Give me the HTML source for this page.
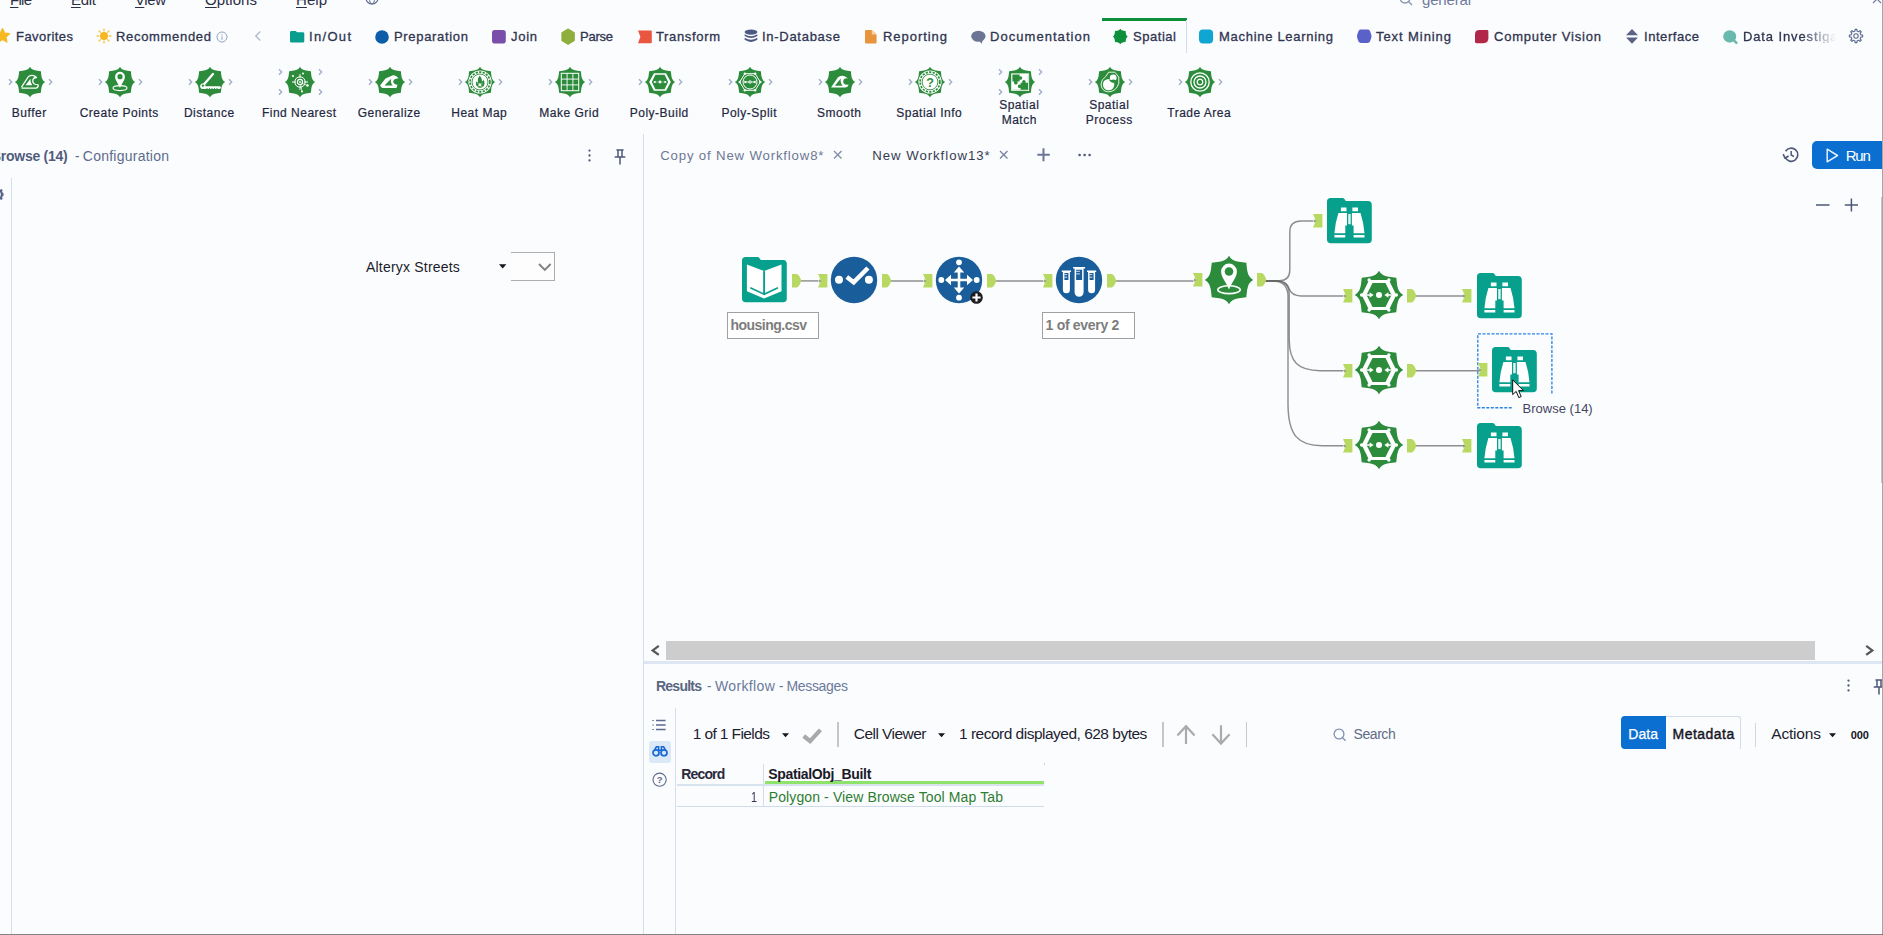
<!DOCTYPE html>
<html lang="en"><head><meta charset="utf-8"><title>Alteryx Designer - New Workflow13*</title>
<style>
html,body{margin:0;padding:0}
body{width:1883px;height:935px;overflow:hidden;background:#fbfcfe;font-family:"Liberation Sans",sans-serif;position:relative}
.t{position:absolute;white-space:pre;}
.tl{position:absolute;width:120px;text-align:center;font-size:12px;line-height:16px;letter-spacing:0.5px;text-indent:0.5px;color:#1f2840;white-space:pre;-webkit-text-stroke:0.2px #1f2840}
.abs{position:absolute}
svg{position:absolute;overflow:visible}
</style></head><body>
<!--LINES-->
<div class="abs" style="left:1881px;top:0px;width:1px;height:935px;background:#ffffff;"></div>
<div class="abs" style="left:0px;top:933px;width:1883px;height:1px;background:#ffffff;"></div>
<div class="abs" style="left:1880.9px;top:197px;width:1.1px;height:286px;background:#c3c5c4;"></div>
<div class="abs" style="left:1879.8px;top:197px;width:1.1px;height:286px;background:#ffffff;"></div>
<div class="abs" style="left:1102px;top:18px;width:85px;height:2.5px;background:#0e8f3c;"></div>
<div class="abs" style="left:1186.3px;top:20px;width:1px;height:33px;background:#d3dbe8;"></div>
<div class="abs" style="left:11px;top:178px;width:1px;height:757px;background:#d6deec;"></div>
<div class="abs" style="left:643px;top:134px;width:1px;height:801px;background:#d3ddec;"></div>
<div class="abs" style="left:666px;top:641px;width:1149px;height:19px;background:#cdcdcd;"></div>
<div class="abs" style="left:644px;top:661px;width:1238px;height:3px;background:#dde6f2;"></div>
<div class="abs" style="left:675px;top:708px;width:1px;height:227px;background:#d6deec;"></div>
<!--CATEGORY ICONS-->
<svg style="left:-5px;top:28.0px" width="15" height="16" viewBox="0 0 15 16" ><polygon points="7.50,0.50 9.62,5.09 14.63,5.68 10.92,9.11 11.91,14.07 7.50,11.60 3.09,14.07 4.08,9.11 0.37,5.68 5.38,5.09" fill="#f6b91f" stroke="#f6b91f" stroke-width="1.2" stroke-linejoin="round"/></svg>
<svg style="left:96.5px;top:29.0px" width="14" height="14" viewBox="0 0 14 14" ><circle cx="7" cy="7" r="4" fill="#f6b624"/><line x1="12.20" y1="7.00" x2="14.00" y2="7.00" stroke="#f8c24a" stroke-width="1.3" stroke-linecap="round"/><line x1="10.68" y1="10.68" x2="11.95" y2="11.95" stroke="#f8c24a" stroke-width="1.3" stroke-linecap="round"/><line x1="7.00" y1="12.20" x2="7.00" y2="14.00" stroke="#f8c24a" stroke-width="1.3" stroke-linecap="round"/><line x1="3.32" y1="10.68" x2="2.05" y2="11.95" stroke="#f8c24a" stroke-width="1.3" stroke-linecap="round"/><line x1="1.80" y1="7.00" x2="0.00" y2="7.00" stroke="#f8c24a" stroke-width="1.3" stroke-linecap="round"/><line x1="3.32" y1="3.32" x2="2.05" y2="2.05" stroke="#f8c24a" stroke-width="1.3" stroke-linecap="round"/><line x1="7.00" y1="1.80" x2="7.00" y2="0.00" stroke="#f8c24a" stroke-width="1.3" stroke-linecap="round"/><line x1="10.68" y1="3.32" x2="11.95" y2="2.05" stroke="#f8c24a" stroke-width="1.3" stroke-linecap="round"/></svg>
<svg style="left:216px;top:31px" width="12" height="12" viewBox="0 0 12 12" ><circle cx="6" cy="6" r="5" fill="none" stroke="#8fa5c0" stroke-width="1"/><rect x="5.5" y="5.2" width="1" height="3.6" fill="#8fa5c0"/><rect x="5.5" y="3.2" width="1" height="1.1" fill="#8fa5c0"/></svg>
<svg style="left:254px;top:30.0px" width="8" height="12" viewBox="0 0 8 12" ><path d="M6.2,1.6 L1.8,6 L6.2,10.4" fill="none" stroke="#b3bccc" stroke-width="1.4"/></svg>
<svg style="left:289.5px;top:29.8px" width="14.30" height="13.40" viewBox="0 0 15 15" preserveAspectRatio="none"><path d="M1.5,1 H6 L7.5,2.5 H13.5 Q15,2.5 15,4 V12.5 Q15,14 13.5,14 H1.5 Q0,14 0,12.5 V2.5 Q0,1 1.5,1Z" fill="#089d8c"/></svg>
<svg style="left:375px;top:29.5px" width="14.00" height="14.00" viewBox="0 0 15 15" preserveAspectRatio="none"><circle cx="7.5" cy="7.5" r="7.3" fill="#0c5ea9"/></svg>
<svg style="left:492px;top:29.5px" width="13.80" height="13.60" viewBox="0 0 14.5 14.5" preserveAspectRatio="none"><rect x="0" y="0" width="14.5" height="14.5" rx="3" fill="#7a4fa9"/></svg>
<svg style="left:561px;top:28.6px" width="14.20" height="15.30" viewBox="0 0 15 15" preserveAspectRatio="none"><polygon points="7.50,-0.10 14.08,3.70 14.08,11.30 7.50,15.10 0.92,11.30 0.92,3.70" fill="#8fae3d" stroke="#8fae3d" stroke-width="1" stroke-linejoin="round"/></svg>
<svg style="left:637.5px;top:29.6px" width="13.80" height="13.60" viewBox="0 0 14.5 14.5" preserveAspectRatio="none"><path d="M0,0.5 H13.5 Q14.5,0.5 14.5,1.5 V13 Q14.5,14 13.5,14 H0 L2.5,7.2Z" fill="#e8563f"/></svg>
<svg style="left:743.6px;top:29.2px" width="14.00" height="14.40" viewBox="0 0 15 15" preserveAspectRatio="none"><ellipse cx="7.5" cy="3.2" rx="6.8" ry="2.7" fill="#4d5985"/><path d="M0.7,5.5 Q7.5,9.5 14.3,5.5 V7.3 Q7.5,11.5 0.7,7.3Z" fill="#4d5985"/><path d="M0.7,9.2 Q7.5,13.2 14.3,9.2 V11.3 Q7.5,15.6 0.7,11.3Z" fill="#4d5985"/></svg>
<svg style="left:865px;top:29.5px" width="11.60" height="13.60" viewBox="0 0 12 15" preserveAspectRatio="none"><path d="M1.2,0 H7 L12,5 V13.8 Q12,15 10.8,15 H1.2 Q0,15 0,13.8 V1.2 Q0,0 1.2,0Z" fill="#e8943c"/><path d="M7,0 V5 H12Z" fill="#f6cfa0"/></svg>
<svg style="left:970.6px;top:29.8px" width="14.60" height="13.80" viewBox="0 0 15.5 15" preserveAspectRatio="none"><ellipse cx="7.8" cy="6.8" rx="7.6" ry="6" fill="#6c7496"/><path d="M8,11 L11.5,15 L12.5,10Z" fill="#6c7496"/></svg>
<svg style="left:1112.6px;top:28.6px" width="14.60" height="15.00" viewBox="0 0 15.5 15.5" preserveAspectRatio="none"><path transform="translate(7.75,7.75)" d="M0,-7.90Q0.79,-6.32 3.16,-5.93L5.65,-5.62L5.93,-3.16Q6.32,-0.79 7.90,0.00Q6.32,0.79 5.93,3.16L5.62,5.65L3.16,5.93Q0.79,6.32 0.00,7.90Q-0.79,6.32 -3.16,5.93L-5.65,5.62L-5.93,3.16Q-6.32,0.79 -7.90,0.00Q-6.32,-0.79 -5.93,-3.16L-5.62,-5.65L-3.16,-5.92Q-0.79,-6.32 -0.00,-7.90Z" fill="#0e8f3c"/></svg>
<svg style="left:1199.2px;top:28.8px" width="14.10" height="14.90" viewBox="0 0 15 15" preserveAspectRatio="none"><rect x="0" y="0.5" width="15" height="14" rx="4.2" fill="#0fa6d1"/></svg>
<svg style="left:1357.3px;top:29px" width="14.50" height="14.50" viewBox="0 0 15 15" preserveAspectRatio="none"><path d="M4,0.5 H11 Q12.6,0.5 13.4,2 L14.8,6 Q15.2,7.5 14.8,9 L13.4,13 Q12.6,14.5 11,14.5 H4 Q2.4,14.5 1.6,13 L0.2,9 Q-0.2,7.5 0.2,6 L1.6,2 Q2.4,0.5 4,0.5Z" fill="#5a62c9"/></svg>
<svg style="left:1475px;top:29.7px" width="13.40" height="13.20" viewBox="0 0 13.5 13.5" preserveAspectRatio="none"><path d="M4.5,0 H12 Q13.5,0 13.5,1.5 V8.5 Q13.5,13.5 8.5,13.5 H1.5 Q0,13.5 0,12 V4.5 Q0,0 4.5,0Z" fill="#b02747"/></svg>
<svg style="left:1626px;top:28.8px" width="12.00" height="14.80" viewBox="0 0 12 15" preserveAspectRatio="none"><path d="M6,0 L12,6.3 H0Z" fill="#5a6286"/><path d="M6,15 L12,8.7 H0Z" fill="#5a6286"/></svg>
<svg style="left:1723.2px;top:29.6px" width="14.40" height="13.80" viewBox="0 0 15 15" preserveAspectRatio="none"><circle cx="7" cy="7" r="6.8" fill="#6ab9ad"/><path d="M10.5,10.5 L14,14" stroke="#6ab9ad" stroke-width="2.6" stroke-linecap="round"/></svg>
<svg style="left:1848.5px;top:29.0px" width="14" height="14" viewBox="0 0 14 14" ><path d="M11.91,6.05L13.63,6.07L13.63,7.93L11.91,7.95L11.15,9.80L12.35,11.03L11.03,12.35L9.80,11.15L7.95,11.91L7.93,13.63L6.07,13.63L6.05,11.91L4.20,11.15L2.97,12.35L1.65,11.03L2.85,9.80L2.09,7.95L0.37,7.93L0.37,6.07L2.09,6.05L2.85,4.20L1.65,2.97L2.97,1.65L4.20,2.85L6.05,2.09L6.07,0.37L7.93,0.37L7.95,2.09L9.80,2.85L11.03,1.65L12.35,2.97L11.15,4.20Z" fill="none" stroke="#5e6a8c" stroke-width="1.1" stroke-linejoin="round"/><circle cx="7" cy="7" r="2.2" fill="none" stroke="#5e6a8c" stroke-width="1.1"/></svg>
<svg style="left:1399px;top:-8px" width="14" height="14" viewBox="0 0 14 14" ><circle cx="6" cy="6" r="5" fill="none" stroke="#8794b3" stroke-width="1.3"/><path d="M9.7,9.7 L13,13" stroke="#8794b3" stroke-width="1.4"/></svg>
<svg style="left:1872px;top:-6px" width="10" height="10" viewBox="0 0 10 10" ><path d="M1,1 L9,9 M9,1 L1,9" stroke="#6f7b9b" stroke-width="1.2"/></svg>
<svg style="left:365px;top:-9px" width="14" height="14" viewBox="0 0 14 14" ><circle cx="7" cy="7" r="6" fill="none" stroke="#5e6a8c" stroke-width="1.1"/><ellipse cx="7" cy="7" rx="2.6" ry="6" fill="none" stroke="#5e6a8c" stroke-width="1"/></svg>
<!--PALETTE-->
<svg style="left:13.7px;top:66px" width="32" height="32" viewBox="-16 -16 32 32" ><path d="M0,-15.20Q1.52,-12.16 6.08,-11.40L10.87,-10.82L11.40,-6.08Q12.16,-1.52 15.20,0.00Q12.16,1.52 11.40,6.08L10.82,10.87L6.08,11.40Q1.52,12.16 0.00,15.20Q-1.52,12.16 -6.08,11.40L-10.87,10.82L-11.40,6.08Q-12.16,1.52 -15.20,0.00Q-12.16,-1.52 -11.40,-6.08L-10.82,-10.87L-6.08,-11.40Q-1.52,-12.16 -0.00,-15.20Z" fill="#2c8c3c"/><path d="M-8.5,5.2 L-1.5,-5.5 Q3,-8 6.5,-4.5 Q2.5,-4.5 2.8,-0.5 Q3.2,2.8 8,2.6 Q8.8,5.4 6,6.2 H-8.5" fill="none" stroke="#fff" stroke-width="1.3" stroke-linejoin="round"/><path d="M-4.5,3.2 L0.5,-3.2 Q0,1 2.2,3.2Z" fill="#fff"/></svg>
<svg style="left:7.699999999999999px;top:78px" width="5" height="8" viewBox="0 0 5 8" ><path d="M1,1.2 L3.7,4 L1,6.8" fill="none" stroke="#a0adca" stroke-width="1.35"/></svg>
<svg style="left:47.7px;top:78px" width="5" height="8" viewBox="0 0 5 8" ><path d="M1,1.2 L3.7,4 L1,6.8" fill="none" stroke="#a0adca" stroke-width="1.35"/></svg>
<svg style="left:103.7px;top:66px" width="32" height="32" viewBox="-16 -16 32 32" ><path d="M0,-15.20Q1.52,-12.16 6.08,-11.40L10.87,-10.82L11.40,-6.08Q12.16,-1.52 15.20,0.00Q12.16,1.52 11.40,6.08L10.82,10.87L6.08,11.40Q1.52,12.16 0.00,15.20Q-1.52,12.16 -6.08,11.40L-10.87,10.82L-11.40,6.08Q-12.16,1.52 -15.20,0.00Q-12.16,-1.52 -11.40,-6.08L-10.82,-10.87L-6.08,-11.40Q-1.52,-12.16 -0.00,-15.20Z" fill="#2c8c3c"/><path d="M0,5.9 C-1.6,1.6 -4.9,-1.6 -4.9,-5.3 A4.9,4.9 0 0 1 4.9,-5.3 C4.9,-1.6 1.6,1.6 0,5.9Z" fill="#fff"/><circle cx="0" cy="-5.3" r="2.6" fill="#2c8c3c"/><ellipse cx="0" cy="6.1" rx="7" ry="2.5" fill="none" stroke="#fff" stroke-width="1.1"/></svg>
<svg style="left:97.7px;top:78px" width="5" height="8" viewBox="0 0 5 8" ><path d="M1,1.2 L3.7,4 L1,6.8" fill="none" stroke="#a0adca" stroke-width="1.35"/></svg>
<svg style="left:137.7px;top:78px" width="5" height="8" viewBox="0 0 5 8" ><path d="M1,1.2 L3.7,4 L1,6.8" fill="none" stroke="#a0adca" stroke-width="1.35"/></svg>
<svg style="left:193.7px;top:66px" width="32" height="32" viewBox="-16 -16 32 32" ><path d="M0,-15.20Q1.52,-12.16 6.08,-11.40L10.87,-10.82L11.40,-6.08Q12.16,-1.52 15.20,0.00Q12.16,1.52 11.40,6.08L10.82,10.87L6.08,11.40Q1.52,12.16 0.00,15.20Q-1.52,12.16 -6.08,11.40L-10.87,10.82L-11.40,6.08Q-12.16,1.52 -15.20,0.00Q-12.16,-1.52 -11.40,-6.08L-10.82,-10.87L-6.08,-11.40Q-1.52,-12.16 -0.00,-15.20Z" fill="#2c8c3c"/><path d="M-7.2,3.8 L3,-8" stroke="#fff" stroke-width="2.3" stroke-linecap="round"/><path d="M-7.4,5.6 H9.4" stroke="#fff" stroke-width="2.9" stroke-linecap="round"/><circle cx="-7.2" cy="4.2" r="2.6" fill="#fff"/><circle cx="-7" cy="3.6" r="1.2" fill="#2c8c3c"/><path d="M-3,6 V7.4 M-0.5,6 V7.4 M2,6 V7.4 M4.5,6 V7.4 M7,6 V7.4" stroke="#2c8c3c" stroke-width="0.9"/></svg>
<svg style="left:187.7px;top:78px" width="5" height="8" viewBox="0 0 5 8" ><path d="M1,1.2 L3.7,4 L1,6.8" fill="none" stroke="#a0adca" stroke-width="1.35"/></svg>
<svg style="left:227.7px;top:78px" width="5" height="8" viewBox="0 0 5 8" ><path d="M1,1.2 L3.7,4 L1,6.8" fill="none" stroke="#a0adca" stroke-width="1.35"/></svg>
<svg style="left:283.7px;top:66px" width="32" height="32" viewBox="-16 -16 32 32" ><path d="M0,-15.20Q1.52,-12.16 6.08,-11.40L10.87,-10.82L11.40,-6.08Q12.16,-1.52 15.20,0.00Q12.16,1.52 11.40,6.08L10.82,10.87L6.08,11.40Q1.52,12.16 0.00,15.20Q-1.52,12.16 -6.08,11.40L-10.87,10.82L-11.40,6.08Q-12.16,1.52 -15.20,0.00Q-12.16,-1.52 -11.40,-6.08L-10.82,-10.87L-6.08,-11.40Q-1.52,-12.16 -0.00,-15.20Z" fill="#2c8c3c"/><circle cx="0" cy="0" r="5.2" fill="none" stroke="#fff" stroke-width="1"/><circle cx="0" cy="0" r="2.6" fill="none" stroke="#fff" stroke-width="1.1"/><circle cx="0" cy="0" r="0.9" fill="#fff"/><path d="M0,-8 V-4 M0,8 V4 M-8,0 H-4 M8,0 H4" stroke="#fff" stroke-width="1"/><circle cx="-7" cy="-6" r="1.1" fill="#fff"/><circle cx="3" cy="-8.5" r="1" fill="#fff"/><circle cx="7.5" cy="3.5" r="1.2" fill="#fff"/><circle cx="2" cy="9.5" r="1" fill="#fff"/><path d="M1,1 L7.5,3.5 M0.5,2 L2,9.5" stroke="#fff" stroke-width="0.7"/></svg>
<svg style="left:277.7px;top:68px" width="5" height="8" viewBox="0 0 5 8" ><path d="M1,1.2 L3.7,4 L1,6.8" fill="none" stroke="#a0adca" stroke-width="1.35"/></svg>
<svg style="left:317.7px;top:68px" width="5" height="8" viewBox="0 0 5 8" ><path d="M1,1.2 L3.7,4 L1,6.8" fill="none" stroke="#a0adca" stroke-width="1.35"/></svg>
<svg style="left:277.7px;top:87.5px" width="5" height="8" viewBox="0 0 5 8" ><path d="M1,1.2 L3.7,4 L1,6.8" fill="none" stroke="#a0adca" stroke-width="1.35"/></svg>
<svg style="left:317.7px;top:87.5px" width="5" height="8" viewBox="0 0 5 8" ><path d="M1,1.2 L3.7,4 L1,6.8" fill="none" stroke="#a0adca" stroke-width="1.35"/></svg>
<svg style="left:373.7px;top:66px" width="32" height="32" viewBox="-16 -16 32 32" ><path d="M0,-15.20Q1.52,-12.16 6.08,-11.40L10.87,-10.82L11.40,-6.08Q12.16,-1.52 15.20,0.00Q12.16,1.52 11.40,6.08L10.82,10.87L6.08,11.40Q1.52,12.16 0.00,15.20Q-1.52,12.16 -6.08,11.40L-10.87,10.82L-11.40,6.08Q-12.16,1.52 -15.20,0.00Q-12.16,-1.52 -11.40,-6.08L-10.82,-10.87L-6.08,-11.40Q-1.52,-12.16 -0.00,-15.20Z" fill="#2c8c3c"/><path d="M-10,3.5 L-4.5,-3.5 L3,-6.8 Q7,-6.5 8.5,-3.5 Q4,-4 3.2,-0.5 Q3.5,2.5 7.5,2.8 L6.5,6 H-8Z" fill="#fff"/><path d="M-5.5,3.6 L1.2,-3.2 Q0.2,1 2.8,3.6Z" fill="#2c8c3c"/></svg>
<svg style="left:367.7px;top:78px" width="5" height="8" viewBox="0 0 5 8" ><path d="M1,1.2 L3.7,4 L1,6.8" fill="none" stroke="#a0adca" stroke-width="1.35"/></svg>
<svg style="left:407.7px;top:78px" width="5" height="8" viewBox="0 0 5 8" ><path d="M1,1.2 L3.7,4 L1,6.8" fill="none" stroke="#a0adca" stroke-width="1.35"/></svg>
<svg style="left:463.7px;top:66px" width="32" height="32" viewBox="-16 -16 32 32" ><path d="M0,-15.20Q1.52,-12.16 6.08,-11.40L10.87,-10.82L11.40,-6.08Q12.16,-1.52 15.20,0.00Q12.16,1.52 11.40,6.08L10.82,10.87L6.08,11.40Q1.52,12.16 0.00,15.20Q-1.52,12.16 -6.08,11.40L-10.87,10.82L-11.40,6.08Q-12.16,1.52 -15.20,0.00Q-12.16,-1.52 -11.40,-6.08L-10.82,-10.87L-6.08,-11.40Q-1.52,-12.16 -0.00,-15.20Z" fill="#2c8c3c"/><circle cx="0" cy="0" r="11.6" fill="#fff"/><circle cx="0" cy="0" r="9.9" fill="none" stroke="#2c8c3c" stroke-width="1.7" stroke-dasharray="2.2 1.3"/><circle cx="0" cy="0" r="8" fill="none" stroke="#2c8c3c" stroke-width="0.9"/><path d="M-0.3,-6.2 Q2.6,-3 1.8,-0.4 Q3.6,-1.2 3.4,-2.6 Q5.6,1.6 3.4,4.4 Q1.2,6.4 -1.6,5.4 Q-5,3.4 -3.8,-0.8 Q-2.8,0.8 -2,0.4 Q-2.8,-3.4 -0.3,-6.2Z" fill="#2c8c3c"/><path d="M0,0.8 Q1.8,2.6 0.8,4.4 Q-1.6,4.4 -1.4,2.4Z" fill="#fff"/><path d="M-2.6,4.6 L2.6,1.2 M-2.4,1.4 L2.6,4.6" stroke="#fff" stroke-width="0.6"/></svg>
<svg style="left:457.7px;top:78px" width="5" height="8" viewBox="0 0 5 8" ><path d="M1,1.2 L3.7,4 L1,6.8" fill="none" stroke="#a0adca" stroke-width="1.35"/></svg>
<svg style="left:497.7px;top:78px" width="5" height="8" viewBox="0 0 5 8" ><path d="M1,1.2 L3.7,4 L1,6.8" fill="none" stroke="#a0adca" stroke-width="1.35"/></svg>
<svg style="left:553.7px;top:66px" width="32" height="32" viewBox="-16 -16 32 32" ><path d="M0,-15.20Q1.52,-12.16 6.08,-11.40L10.87,-10.82L11.40,-6.08Q12.16,-1.52 15.20,0.00Q12.16,1.52 11.40,6.08L10.82,10.87L6.08,11.40Q1.52,12.16 0.00,15.20Q-1.52,12.16 -6.08,11.40L-10.87,10.82L-11.40,6.08Q-12.16,1.52 -15.20,0.00Q-12.16,-1.52 -11.40,-6.08L-10.82,-10.87L-6.08,-11.40Q-1.52,-12.16 -0.00,-15.20Z" fill="#2c8c3c"/><rect x="-8.7" y="-8.7" width="17.4" height="17.4" fill="none" stroke="#fff" stroke-width="1"/><path d="M-2.9,-8.7 V8.7 M2.9,-8.7 V8.7 M-8.7,-2.9 H8.7 M-8.7,2.9 H8.7" stroke="#fff" stroke-width="0.9"/></svg>
<svg style="left:547.7px;top:78px" width="5" height="8" viewBox="0 0 5 8" ><path d="M1,1.2 L3.7,4 L1,6.8" fill="none" stroke="#a0adca" stroke-width="1.35"/></svg>
<svg style="left:587.7px;top:78px" width="5" height="8" viewBox="0 0 5 8" ><path d="M1,1.2 L3.7,4 L1,6.8" fill="none" stroke="#a0adca" stroke-width="1.35"/></svg>
<svg style="left:643.7px;top:66px" width="32" height="32" viewBox="-16 -16 32 32" ><path d="M0,-15.20Q1.52,-12.16 6.08,-11.40L10.87,-10.82L11.40,-6.08Q12.16,-1.52 15.20,0.00Q12.16,1.52 11.40,6.08L10.82,10.87L6.08,11.40Q1.52,12.16 0.00,15.20Q-1.52,12.16 -6.08,11.40L-10.87,10.82L-11.40,6.08Q-12.16,1.52 -15.20,0.00Q-12.16,-1.52 -11.40,-6.08L-10.82,-10.87L-6.08,-11.40Q-1.52,-12.16 -0.00,-15.20Z" fill="#2c8c3c"/><polygon points="-10.80,0.00 -6.05,-8.80 6.05,-8.80 10.80,0.00 6.05,8.80 -6.05,8.80" fill="#fff"/><polygon points="-7.50,0.00 -4.20,-6.70 4.20,-6.70 7.50,0.00 4.20,6.70 -4.20,6.70" fill="#2c8c3c" stroke="#2c8c3c" stroke-width="1.2" stroke-linejoin="round"/><circle cx="-5.2" cy="0" r="1.1" fill="#fff"/><circle cx="0" cy="0" r="1.45" fill="#fff"/><circle cx="5.2" cy="0" r="1.1" fill="#fff"/><path d="M-6.5,0 H6.5" stroke="#fff" stroke-width="0.5" opacity="0.7"/></svg>
<svg style="left:637.7px;top:78px" width="5" height="8" viewBox="0 0 5 8" ><path d="M1,1.2 L3.7,4 L1,6.8" fill="none" stroke="#a0adca" stroke-width="1.35"/></svg>
<svg style="left:677.7px;top:78px" width="5" height="8" viewBox="0 0 5 8" ><path d="M1,1.2 L3.7,4 L1,6.8" fill="none" stroke="#a0adca" stroke-width="1.35"/></svg>
<svg style="left:733.7px;top:66px" width="32" height="32" viewBox="-16 -16 32 32" ><path d="M0,-15.20Q1.52,-12.16 6.08,-11.40L10.87,-10.82L11.40,-6.08Q12.16,-1.52 15.20,0.00Q12.16,1.52 11.40,6.08L10.82,10.87L6.08,11.40Q1.52,12.16 0.00,15.20Q-1.52,12.16 -6.08,11.40L-10.87,10.82L-11.40,6.08Q-12.16,1.52 -15.20,0.00Q-12.16,-1.52 -11.40,-6.08L-10.82,-10.87L-6.08,-11.40Q-1.52,-12.16 -0.00,-15.20Z" fill="#2c8c3c"/><polygon points="10.30,0.00 5.15,8.31 -5.15,8.31 -10.30,0.00 -5.15,-8.31 5.15,-8.31" fill="none" stroke="#fff" stroke-width="1"/><circle cx="10.30" cy="0.00" r="1.2" fill="#fff"/><circle cx="5.15" cy="8.31" r="1.2" fill="#fff"/><circle cx="-5.15" cy="8.31" r="1.2" fill="#fff"/><circle cx="-10.30" cy="0.00" r="1.2" fill="#fff"/><circle cx="-5.15" cy="-8.31" r="1.2" fill="#fff"/><circle cx="5.15" cy="-8.31" r="1.2" fill="#fff"/><circle cx="0" cy="0" r="7" fill="none" stroke="#fff" stroke-width="1"/><path d="M-6,0 H6" stroke="#fff" stroke-width="0.8"/><path d="M-5.5,-1.6 L-2.8,0 L-5.5,1.6Z M5.5,-1.6 L2.8,0 L5.5,1.6Z" fill="#fff"/><circle cx="0" cy="0" r="1.3" fill="none" stroke="#fff" stroke-width="0.8"/></svg>
<svg style="left:727.7px;top:78px" width="5" height="8" viewBox="0 0 5 8" ><path d="M1,1.2 L3.7,4 L1,6.8" fill="none" stroke="#a0adca" stroke-width="1.35"/></svg>
<svg style="left:767.7px;top:78px" width="5" height="8" viewBox="0 0 5 8" ><path d="M1,1.2 L3.7,4 L1,6.8" fill="none" stroke="#a0adca" stroke-width="1.35"/></svg>
<svg style="left:823.7px;top:66px" width="32" height="32" viewBox="-16 -16 32 32" ><path d="M0,-15.20Q1.52,-12.16 6.08,-11.40L10.87,-10.82L11.40,-6.08Q12.16,-1.52 15.20,0.00Q12.16,1.52 11.40,6.08L10.82,10.87L6.08,11.40Q1.52,12.16 0.00,15.20Q-1.52,12.16 -6.08,11.40L-10.87,10.82L-11.40,6.08Q-12.16,1.52 -15.20,0.00Q-12.16,-1.52 -11.40,-6.08L-10.82,-10.87L-6.08,-11.40Q-1.52,-12.16 -0.00,-15.20Z" fill="#2c8c3c"/><path d="M-9,5.4 L-2,-4.8 Q3.5,-8.2 8,-3.6 Q3.2,-4.4 3.2,-0.2 Q3.6,3.2 8.6,2.6 Q8,5.6 5,5.6Z" fill="#fff"/><path d="M-5.2,3.8 L0.8,-3.4 Q0,1.2 2.6,3.8Z" fill="#2c8c3c"/></svg>
<svg style="left:817.7px;top:78px" width="5" height="8" viewBox="0 0 5 8" ><path d="M1,1.2 L3.7,4 L1,6.8" fill="none" stroke="#a0adca" stroke-width="1.35"/></svg>
<svg style="left:857.7px;top:78px" width="5" height="8" viewBox="0 0 5 8" ><path d="M1,1.2 L3.7,4 L1,6.8" fill="none" stroke="#a0adca" stroke-width="1.35"/></svg>
<svg style="left:913.7px;top:66px" width="32" height="32" viewBox="-16 -16 32 32" ><path d="M0,-15.20Q1.52,-12.16 6.08,-11.40L10.87,-10.82L11.40,-6.08Q12.16,-1.52 15.20,0.00Q12.16,1.52 11.40,6.08L10.82,10.87L6.08,11.40Q1.52,12.16 0.00,15.20Q-1.52,12.16 -6.08,11.40L-10.87,10.82L-11.40,6.08Q-12.16,1.52 -15.20,0.00Q-12.16,-1.52 -11.40,-6.08L-10.82,-10.87L-6.08,-11.40Q-1.52,-12.16 -0.00,-15.20Z" fill="#2c8c3c"/><circle cx="0" cy="0" r="11.6" fill="#fff"/><circle cx="0" cy="0" r="9.9" fill="none" stroke="#2c8c3c" stroke-width="1.7" stroke-dasharray="2.2 1.3"/><circle cx="0" cy="0" r="7.9" fill="none" stroke="#2c8c3c" stroke-width="0.9"/><text x="0" y="4.5" text-anchor="middle" font-family="Liberation Sans, sans-serif" font-weight="700" font-size="12.5" fill="#2c8c3c">?</text></svg>
<svg style="left:907.7px;top:78px" width="5" height="8" viewBox="0 0 5 8" ><path d="M1,1.2 L3.7,4 L1,6.8" fill="none" stroke="#a0adca" stroke-width="1.35"/></svg>
<svg style="left:947.7px;top:78px" width="5" height="8" viewBox="0 0 5 8" ><path d="M1,1.2 L3.7,4 L1,6.8" fill="none" stroke="#a0adca" stroke-width="1.35"/></svg>
<svg style="left:1003.7px;top:66px" width="32" height="32" viewBox="-16 -16 32 32" ><path d="M0,-15.20Q1.52,-12.16 6.08,-11.40L10.87,-10.82L11.40,-6.08Q12.16,-1.52 15.20,0.00Q12.16,1.52 11.40,6.08L10.82,10.87L6.08,11.40Q1.52,12.16 0.00,15.20Q-1.52,12.16 -6.08,11.40L-10.87,10.82L-11.40,6.08Q-12.16,1.52 -15.20,0.00Q-12.16,-1.52 -11.40,-6.08L-10.82,-10.87L-6.08,-11.40Q-1.52,-12.16 -0.00,-15.20Z" fill="#2c8c3c"/><rect x="-8.8" y="-8.6" width="17.9" height="17.5" fill="#fff"/><path d="M-7.6,-7.4 H-0.4 V-5.6 A1.8,1.8 0 1 1 -0.4,-2.4 V-0.4 H-2.8 A1.8,1.8 0 1 1 -5.6,-0.4 H-7.6Z" fill="#2c8c3c"/><path d="M0.6,0.8 H2.4 A1.8,1.8 0 1 1 5.4,0.8 H8 V7.8 H0.6 V5.8 A1.8,1.8 0 1 1 0.6,2.8Z" fill="#2c8c3c"/><path d="M8.2,-7.8 V8 H-7.8" fill="none" stroke="#2c8c3c" stroke-width="0.5" opacity="0.6"/></svg>
<svg style="left:997.7px;top:68px" width="5" height="8" viewBox="0 0 5 8" ><path d="M1,1.2 L3.7,4 L1,6.8" fill="none" stroke="#a0adca" stroke-width="1.35"/></svg>
<svg style="left:1037.7px;top:68px" width="5" height="8" viewBox="0 0 5 8" ><path d="M1,1.2 L3.7,4 L1,6.8" fill="none" stroke="#a0adca" stroke-width="1.35"/></svg>
<svg style="left:997.7px;top:87.5px" width="5" height="8" viewBox="0 0 5 8" ><path d="M1,1.2 L3.7,4 L1,6.8" fill="none" stroke="#a0adca" stroke-width="1.35"/></svg>
<svg style="left:1037.7px;top:87.5px" width="5" height="8" viewBox="0 0 5 8" ><path d="M1,1.2 L3.7,4 L1,6.8" fill="none" stroke="#a0adca" stroke-width="1.35"/></svg>
<svg style="left:1093.7px;top:66px" width="32" height="32" viewBox="-16 -16 32 32" ><path d="M0,-15.20Q1.52,-12.16 6.08,-11.40L10.87,-10.82L11.40,-6.08Q12.16,-1.52 15.20,0.00Q12.16,1.52 11.40,6.08L10.82,10.87L6.08,11.40Q1.52,12.16 0.00,15.20Q-1.52,12.16 -6.08,11.40L-10.87,10.82L-11.40,6.08Q-12.16,1.52 -15.20,0.00Q-12.16,-1.52 -11.40,-6.08L-10.82,-10.87L-6.08,-11.40Q-1.52,-12.16 -0.00,-15.20Z" fill="#2c8c3c"/><path d="M-1.4,-9.8 H4.8 L8.8,-5 V1.2 Q6.4,9.6 -1.8,9.9 Q-8.8,9 -9,2 Q-8.4,-3 -4.4,-5.2Z" fill="none" stroke="#fff" stroke-width="0.9"/><circle cx="-1.4" cy="2.6" r="5.7" fill="#fff"/><circle cx="3.2" cy="-4.2" r="3.4" fill="#fff"/><path d="M-1.6,-2.8 Q2.4,3 7,-0.4 Q4.4,-3.8 1.2,-2 Z" fill="#2c8c3c"/></svg>
<svg style="left:1087.7px;top:78px" width="5" height="8" viewBox="0 0 5 8" ><path d="M1,1.2 L3.7,4 L1,6.8" fill="none" stroke="#a0adca" stroke-width="1.35"/></svg>
<svg style="left:1127.7px;top:78px" width="5" height="8" viewBox="0 0 5 8" ><path d="M1,1.2 L3.7,4 L1,6.8" fill="none" stroke="#a0adca" stroke-width="1.35"/></svg>
<svg style="left:1183.7px;top:66px" width="32" height="32" viewBox="-16 -16 32 32" ><path d="M0,-15.20Q1.52,-12.16 6.08,-11.40L10.87,-10.82L11.40,-6.08Q12.16,-1.52 15.20,0.00Q12.16,1.52 11.40,6.08L10.82,10.87L6.08,11.40Q1.52,12.16 0.00,15.20Q-1.52,12.16 -6.08,11.40L-10.87,10.82L-11.40,6.08Q-12.16,1.52 -15.20,0.00Q-12.16,-1.52 -11.40,-6.08L-10.82,-10.87L-6.08,-11.40Q-1.52,-12.16 -0.00,-15.20Z" fill="#2c8c3c"/><circle cx="0" cy="0" r="9.2" fill="none" stroke="#fff" stroke-width="1.3"/><circle cx="0" cy="0" r="6" fill="none" stroke="#fff" stroke-width="1.3"/><circle cx="0" cy="0" r="2.8" fill="none" stroke="#fff" stroke-width="1.3"/></svg>
<svg style="left:1177.7px;top:78px" width="5" height="8" viewBox="0 0 5 8" ><path d="M1,1.2 L3.7,4 L1,6.8" fill="none" stroke="#a0adca" stroke-width="1.35"/></svg>
<svg style="left:1217.7px;top:78px" width="5" height="8" viewBox="0 0 5 8" ><path d="M1,1.2 L3.7,4 L1,6.8" fill="none" stroke="#a0adca" stroke-width="1.35"/></svg>
<div class="tl" style="left:-31.0px;top:104.54px">Buffer</div><div class="tl" style="left:59.0px;top:104.54px">Create Points</div><div class="tl" style="left:149.0px;top:104.54px">Distance</div><div class="tl" style="left:239.0px;top:104.54px">Find Nearest</div><div class="tl" style="left:329.0px;top:104.54px">Generalize</div><div class="tl" style="left:419.0px;top:104.54px">Heat Map</div><div class="tl" style="left:509.0px;top:104.54px">Make Grid</div><div class="tl" style="left:599.0px;top:104.54px">Poly-Build</div><div class="tl" style="left:689.0px;top:104.54px">Poly-Split</div><div class="tl" style="left:779.0px;top:104.54px">Smooth</div><div class="tl" style="left:869.0px;top:104.54px">Spatial Info</div><div class="tl" style="left:959.0px;top:96.54px">Spatial</div><div class="tl" style="left:959.0px;top:112.44px">Match</div><div class="tl" style="left:1049.0px;top:96.54px">Spatial</div><div class="tl" style="left:1049.0px;top:112.44px">Process</div><div class="tl" style="left:1139.0px;top:104.54px">Trade Area</div>
<!--PANEL ICONS-->
<svg style="left:588.2px;top:148.5px" width="3" height="13" viewBox="0 0 3 13" ><circle cx="1.5" cy="1.6" r="1.15" fill="#4d5878"/><circle cx="1.5" cy="6.5" r="1.15" fill="#4d5878"/><circle cx="1.5" cy="11.4" r="1.15" fill="#4d5878"/></svg>
<svg style="left:614px;top:148.6px" width="12" height="16" viewBox="0 0 12 16" ><path d="M3,1 H9 M4,1 V7.2 M8,1 V7.2 M1.2,8 H10.8 M6,8 V15" fill="none" stroke="#4d5878" stroke-width="1.5" stroke-linecap="round"/><path d="M4,1.5 H8 V7.5 H4Z" fill="none"/></svg>
<svg style="left:-9.5px;top:188px" width="13" height="13" viewBox="0 0 13 13" ><circle cx="6.5" cy="6.5" r="4.4" fill="none" stroke="#56628a" stroke-width="2.2"/><path d="M11,5.2 H12.6 V7.8 H11Z M9.2,1.8 L10.6,0.9 L11.8,2.6 L10.4,3.6Z M9.2,11.2 L10.6,12.1 L11.8,10.4 L10.4,9.4Z" fill="#56628a"/></svg>
<svg style="left:833px;top:149.7px" width="9.5" height="9.5" viewBox="0 0 9.5 9.5" ><path d="M1,1 L8.5,8.5 M8.5,1 L1,8.5" stroke="#7f8ba8" stroke-width="1.3"/></svg>
<svg style="left:999px;top:149.7px" width="9.5" height="9.5" viewBox="0 0 9.5 9.5" ><path d="M1,1 L8.5,8.5 M8.5,1 L1,8.5" stroke="#75819f" stroke-width="1.3"/></svg>
<svg style="left:1037px;top:148px" width="13" height="13.4" viewBox="0 0 13 13.4" ><path d="M6.5,0.3 V13.2 M0.3,6.7 H12.8" stroke="#6a7597" stroke-width="2"/></svg>
<svg style="left:1078px;top:153px" width="14" height="4" viewBox="0 0 14 4" ><circle cx="1.6" cy="2" r="1.3" fill="#4d5878"/><circle cx="6.6" cy="2" r="1.3" fill="#4d5878"/><circle cx="11.6" cy="2" r="1.3" fill="#4d5878"/></svg>
<svg style="left:1782px;top:146px" width="18" height="18" viewBox="0 0 18 18" ><path d="M3.2,11.5 A6.6,6.6 0 1 0 3.6,5.2" fill="none" stroke="#4d5878" stroke-width="1.6"/><path d="M1.2,8.2 L3,12.2 L6.6,10" fill="none" stroke="#4d5878" stroke-width="1.6" stroke-linejoin="round"/><path d="M9.2,5 V9 L12,10.6" fill="none" stroke="#4d5878" stroke-width="1.5"/></svg>
<div class="abs" style="left:1812px;top:141px;width:70px;height:27.6px;background:#0b6fd2;border-radius:5px 0 0 5px;"></div>
<svg style="left:1826px;top:147.5px" width="13" height="15" viewBox="0 0 13 15" ><path d="M1.2,1.2 L11.5,7.5 L1.2,13.8Z" fill="none" stroke="#e6f0fb" stroke-width="1.5" stroke-linejoin="round"/></svg>
<svg style="left:1816px;top:198px" width="44" height="14" viewBox="0 0 44 14" ><path d="M0,7 H13.5" stroke="#4d5878" stroke-width="1.5"/><path d="M28.8,7 H42 M35.4,0.5 V13.5" stroke="#4d5878" stroke-width="1.5"/></svg>
<svg style="left:499.3px;top:264.3px" width="8" height="5" viewBox="0 0 8 5" ><path d="M0,0.3 H7.4 L3.7,4.4Z" fill="#15151f"/></svg>
<div class="abs" style="left:511px;top:252px;width:43.3px;height:26.6px;border:1.6px solid #adadad;border-left:none;background:#fdfdfe"></div>
<svg style="left:538px;top:263px" width="14" height="9" viewBox="0 0 14 9" ><path d="M1,1 L6.8,7 L12.6,1" fill="none" stroke="#828282" stroke-width="1.9"/></svg>
<svg style="left:650.6px;top:645px" width="9" height="11" viewBox="0 0 9 11" ><path d="M7.8,0.9 L1.7,5.4 L7.8,9.9" fill="none" stroke="#575757" stroke-width="2.3"/></svg>
<svg style="left:1865px;top:645px" width="9" height="11" viewBox="0 0 9 11" ><path d="M1.2,0.9 L7.3,5.4 L1.2,9.9" fill="none" stroke="#575757" stroke-width="2.3"/></svg>
<!--CANVAS-->
<svg style="left:0;top:0" width="1883" height="935" fill="none" stroke="#646464" stroke-opacity="0.72" stroke-width="1.45"><path d="M800.5,280.9 H818.5" /><path d="M890.5,280.9 H923.5" /><path d="M995.5,280.9 H1043.5" /><path d="M1115.5,280.9 H1193.5" /><path d="M1415.5,295.9 H1463.5" /><path d="M1415.5,370.7 H1479.5" /><path d="M1415.5,445.7 H1463.5" /><path d="M1265,280.7 H1279.5 Q1289.8,280.7 1289.8,270 V232 Q1289.8,221 1301,221 H1313.5"/><path d="M1265,280.9 H1278 Q1286.5,281.3 1288.8,288 Q1291.5,295.9 1301,295.9 H1343.5"/><path d="M1265,281 H1277 Q1288.5,281.3 1289.2,293 V340 C1289.5,362 1298,370.7 1320,370.7 H1343.5"/><path d="M1265,281.2 H1275 Q1287,281.5 1288,295 V405 C1288.3,435 1298,445.8 1322,445.8 H1343.5"/></svg>
<div class="abs" style="left:727px;top:311.8px;width:90px;height:25px;border:1.5px solid #a0a0a0;background:#fff"></div>
<div class="abs" style="left:1042px;top:311.8px;width:90.5px;height:25px;border:1.5px solid #a0a0a0;background:#fff"></div>
<svg style="left:741.9px;top:257.4px" width="45" height="45.5" viewBox="0 0 45 45.5" ><path d="M3.6,0 H15.4 Q16.8,0 17.6,1.2 L18.8,3 H41 Q44.8,3 44.8,6.8 V41.4 Q44.8,45.2 41,45.2 H3.8 Q0,45.2 0,41.4 V3.6 Q0,0 3.6,0Z" fill="#07a08c"/><path d="M4.9,7.5 L22.1,14.1 L39.5,7.5 V34.3 L22.1,41.6 L4.9,34.3Z" fill="#fff"/><path d="M22.1,14.1 V38" stroke="#07a08c" stroke-width="1.9"/><path d="M8.3,30.8 L22.1,37.2 L35.9,30.8" fill="none" stroke="#07a08c" stroke-width="1.7"/></svg>
<svg style="left:791.6px;top:273.55px" width="9.6" height="13.5" viewBox="0 0 9.6 13.5" ><path d="M0,0 H4.8 Q7.4,0.8 9.3,6.75 Q7.4,12.7 4.8,13.5 H0Z" fill="#b8d961"/></svg>
<svg style="left:817.6px;top:273.55px" width="9.6" height="13.5" viewBox="0 0 9.6 13.5" ><path d="M0,0 H9.4 V13.5 H0 L2.9,6.75Z" fill="#b8d961"/><path d="M1.2,5.2 L3.5,7 L1.2,8.8" fill="#76864c" opacity="0.85"/></svg>
<svg style="left:830.1px;top:256.2px" width="48" height="48" viewBox="-24 -24 48 48" ><circle cx="0" cy="0" r="23.2" fill="#1a5d9b"/><circle cx="-15" cy="-0.3" r="4" fill="#fff"/><circle cx="14.9" cy="-0.3" r="4" fill="#fff"/><path d="M-7.2,-3 L-0.3,2.3 L13.9,-12" fill="none" stroke="#fff" stroke-width="4.5"/></svg>
<svg style="left:882px;top:273.55px" width="9.6" height="13.5" viewBox="0 0 9.6 13.5" ><path d="M0,0 H4.8 Q7.4,0.8 9.3,6.75 Q7.4,12.7 4.8,13.5 H0Z" fill="#b8d961"/></svg>
<svg style="left:922.7px;top:273.55px" width="9.6" height="13.5" viewBox="0 0 9.6 13.5" ><path d="M0,0 H9.4 V13.5 H0 L2.9,6.75Z" fill="#b8d961"/><path d="M1.2,5.2 L3.5,7 L1.2,8.8" fill="#76864c" opacity="0.85"/></svg>
<svg style="left:935.1px;top:256.2px" width="48" height="48" viewBox="-24 -24 48 48" ><circle cx="0" cy="0" r="23.2" fill="#1a5d9b"/><circle cx="0" cy="-17.7" r="2.9" fill="#fff"/><circle cx="0" cy="17.7" r="2.9" fill="#fff"/><circle cx="-17.7" cy="0" r="2.9" fill="#fff"/><circle cx="17.7" cy="0" r="2.9" fill="#fff"/><path d="M0,-9 V9 M-9,0 H9" stroke="#fff" stroke-width="2.6"/><path d="M0,-13.6 L5.2,-7.6 H-5.2Z M0,13.6 L5.2,7.6 H-5.2Z M-14,0 L-8,-5.3 V5.3Z M14,0 L8,-5.3 V5.3Z" fill="#fff"/></svg>
<svg style="left:986.9px;top:273.55px" width="9.6" height="13.5" viewBox="0 0 9.6 13.5" ><path d="M0,0 H4.8 Q7.4,0.8 9.3,6.75 Q7.4,12.7 4.8,13.5 H0Z" fill="#b8d961"/></svg>
<svg style="left:969.5px;top:290.7px" width="13" height="13" viewBox="0 0 13 13" ><circle cx="6.5" cy="6.5" r="6.3" fill="#1d1d1f"/><path d="M6.5,2.4 V10.6 M2.4,6.5 H10.6" stroke="#fff" stroke-width="2.2"/></svg>
<svg style="left:1042.7px;top:273.55px" width="9.6" height="13.5" viewBox="0 0 9.6 13.5" ><path d="M0,0 H9.4 V13.5 H0 L2.9,6.75Z" fill="#b8d961"/><path d="M1.2,5.2 L3.5,7 L1.2,8.8" fill="#76864c" opacity="0.85"/></svg>
<svg style="left:1055.1px;top:256.2px" width="48" height="48" viewBox="-24 -24 48 48" ><circle cx="0" cy="0" r="23.2" fill="#1a5d9b"/><path d="M-17.2,-9.6 H-8.0 V-8.1 H-9.1 V9.7 A3.5,3.5 0 0 1 -16.1,9.7 V-8.1 H-17.2Z" fill="#fff"/><path d="M-14.600000000000001,-7.0 H-10.6 V0 H-14.600000000000001Z" fill="#1a5d9b"/><path d="M-14.600000000000001,-5.3999999999999995 H-11.799999999999999 M-14.600000000000001,-2.8 H-11.799999999999999" stroke="#fff" stroke-width="0.9" opacity="0.9"/><path d="M-5.9,-12.9 H6.1 V-11.4 H4.6 V12.3 A4.5,4.5 0 0 1 -4.4,12.3 V-11.4 H-5.9Z" fill="#fff"/><path d="M-2.9000000000000004,-10.3 H3.0999999999999996 V0 H-2.9000000000000004Z" fill="#1a5d9b"/><path d="M-2.9000000000000004,-8.7 H0.9 M-2.9000000000000004,-6.1000000000000005 H0.9" stroke="#fff" stroke-width="0.9" opacity="0.9"/><path d="M8.0,-9.6 H17.2 V-8.1 H16.1 V9.7 A3.5,3.5 0 0 1 9.1,9.7 V-8.1 H8.0Z" fill="#fff"/><path d="M10.6,-7.0 H14.600000000000001 V0 H10.6Z" fill="#1a5d9b"/><path d="M10.6,-5.3999999999999995 H13.4 M10.6,-2.8 H13.4" stroke="#fff" stroke-width="0.9" opacity="0.9"/></svg>
<svg style="left:1106.9px;top:273.55px" width="9.6" height="13.5" viewBox="0 0 9.6 13.5" ><path d="M0,0 H4.8 Q7.4,0.8 9.3,6.75 Q7.4,12.7 4.8,13.5 H0Z" fill="#b8d961"/></svg>
<svg style="left:1192.5px;top:273.45px" width="9.6" height="13.5" viewBox="0 0 9.6 13.5" ><path d="M0,0 H9.4 V13.5 H0 L2.9,6.75Z" fill="#b8d961"/><path d="M1.2,5.2 L3.5,7 L1.2,8.8" fill="#76864c" opacity="0.85"/></svg>
<svg style="left:1204px;top:255.2px" width="50" height="50" viewBox="-25 -25 50 50" ><path d="M0,-24.20Q2.42,-19.36 9.68,-18.15L17.30,-17.23L18.15,-9.68Q19.36,-2.42 24.20,0.00Q19.36,2.42 18.15,9.68L17.23,17.30L9.68,18.15Q2.42,19.36 0.00,24.20Q-2.42,19.36 -9.68,18.15L-17.30,17.23L-18.15,9.68Q-19.36,2.42 -24.20,0.00Q-19.36,-2.42 -18.15,-9.68L-17.23,-17.30L-9.68,-18.15Q-2.42,-19.36 -0.00,-24.20Z" fill="#2c8c3c"/><path d="M0,9.4 C-2.6,2.6 -7.9,-2.6 -7.9,-8.5 A7.9,7.9 0 0 1 7.9,-8.5 C7.9,-2.6 2.6,2.6 0,9.4Z" fill="#fff"/><circle cx="0" cy="-8.5" r="4.3" fill="#2c8c3c"/><ellipse cx="0" cy="9.7" rx="11.2" ry="3.9" fill="none" stroke="#fff" stroke-width="1.6"/></svg>
<svg style="left:1256.6px;top:273.45px" width="9.6" height="13.5" viewBox="0 0 9.6 13.5" ><path d="M0,0 H4.8 Q7.4,0.8 9.3,6.75 Q7.4,12.7 4.8,13.5 H0Z" fill="#b8d961"/></svg>
<svg style="left:1313.2px;top:213.55px" width="9.6" height="13.5" viewBox="0 0 9.6 13.5" ><path d="M0,0 H9.4 V13.5 H0 L2.9,6.75Z" fill="#b8d961"/><path d="M1.2,5.2 L3.5,7 L1.2,8.8" fill="#76864c" opacity="0.85"/></svg>
<svg style="left:1327.1px;top:197.6px" width="45" height="45.5" viewBox="0 0 45 45.5" ><path d="M3.6,0 H15.4 Q16.8,0 17.6,1.2 L18.8,3 H41 Q44.8,3 44.8,6.8 V41.4 Q44.8,45.2 41,45.2 H3.8 Q0,45.2 0,41.4 V3.6 Q0,0 3.6,0Z" fill="#07a08c"/><path d="M13.9,9.5 H19.5 V13.2 H13.9Z M25.4,9.5 H31 V13.2 H25.4Z" fill="#fff"/><path d="M11.4,15 H20 V27.5 H18.3 V35.3 H7.4 Q8.4,24 11.4,15Z" fill="#fff"/><path d="M33.5,15 H24.9 V27.5 H26.6 V35.3 H37.5 Q36.5,24 33.5,15Z" fill="#fff"/><path d="M21.2,16 H23.7 V26.2 H21.2Z" fill="#fff" opacity="0.88"/><path d="M7.4,36.9 H18.3 V39.4 H7.4Z M26.6,36.9 H37.5 V39.4 H26.6Z" fill="#fff"/></svg>
<svg style="left:1343px;top:288.75px" width="9.6" height="13.5" viewBox="0 0 9.6 13.5" ><path d="M0,0 H9.4 V13.5 H0 L2.9,6.75Z" fill="#b8d961"/><path d="M1.2,5.2 L3.5,7 L1.2,8.8" fill="#76864c" opacity="0.85"/></svg>
<svg style="left:1353.8px;top:270.4px" width="50" height="50" viewBox="-25 -25 50 50" ><path d="M0,-24.20Q2.42,-19.36 9.68,-18.15L17.30,-17.23L18.15,-9.68Q19.36,-2.42 24.20,0.00Q19.36,2.42 18.15,9.68L17.23,17.30L9.68,18.15Q2.42,19.36 0.00,24.20Q-2.42,19.36 -9.68,18.15L-17.30,17.23L-18.15,9.68Q-19.36,2.42 -24.20,0.00Q-19.36,-2.42 -18.15,-9.68L-17.23,-17.30L-9.68,-18.15Q-2.42,-19.36 -0.00,-24.20Z" fill="#2c8c3c"/><polygon points="-17.30,0.00 -9.86,-15.00 9.86,-15.00 17.30,0.00 9.86,15.00 -9.86,15.00" fill="#fff"/><circle cx="-17.30" cy="0.00" r="1.75" fill="#fff"/><circle cx="-9.86" cy="-15.00" r="1.75" fill="#fff"/><circle cx="9.86" cy="-15.00" r="1.75" fill="#fff"/><circle cx="17.30" cy="0.00" r="1.75" fill="#fff"/><circle cx="9.86" cy="15.00" r="1.75" fill="#fff"/><circle cx="-9.86" cy="15.00" r="1.75" fill="#fff"/><polygon points="-12.50,0.00 -6.50,-11.90 6.50,-11.90 12.50,0.00 6.50,11.90 -6.50,11.90" fill="#2c8c3c"/><circle cx="0" cy="0" r="3.05" fill="#fff"/><path d="M-12.50,0 H-8.00 M12.50,0 H8.00" stroke="#fff" stroke-width="1.30"/><path d="M-9.40,-2.70 L-5.40,0 L-9.40,2.70Z M9.40,-2.70 L5.40,0 L9.40,2.70Z" fill="#fff"/></svg>
<svg style="left:1406.6px;top:288.75px" width="9.6" height="13.5" viewBox="0 0 9.6 13.5" ><path d="M0,0 H4.8 Q7.4,0.8 9.3,6.75 Q7.4,12.7 4.8,13.5 H0Z" fill="#b8d961"/></svg>
<svg style="left:1343px;top:363.55px" width="9.6" height="13.5" viewBox="0 0 9.6 13.5" ><path d="M0,0 H9.4 V13.5 H0 L2.9,6.75Z" fill="#b8d961"/><path d="M1.2,5.2 L3.5,7 L1.2,8.8" fill="#76864c" opacity="0.85"/></svg>
<svg style="left:1353.8px;top:345.2px" width="50" height="50" viewBox="-25 -25 50 50" ><path d="M0,-24.20Q2.42,-19.36 9.68,-18.15L17.30,-17.23L18.15,-9.68Q19.36,-2.42 24.20,0.00Q19.36,2.42 18.15,9.68L17.23,17.30L9.68,18.15Q2.42,19.36 0.00,24.20Q-2.42,19.36 -9.68,18.15L-17.30,17.23L-18.15,9.68Q-19.36,2.42 -24.20,0.00Q-19.36,-2.42 -18.15,-9.68L-17.23,-17.30L-9.68,-18.15Q-2.42,-19.36 -0.00,-24.20Z" fill="#2c8c3c"/><polygon points="-17.30,0.00 -9.86,-15.00 9.86,-15.00 17.30,0.00 9.86,15.00 -9.86,15.00" fill="#fff"/><circle cx="-17.30" cy="0.00" r="1.75" fill="#fff"/><circle cx="-9.86" cy="-15.00" r="1.75" fill="#fff"/><circle cx="9.86" cy="-15.00" r="1.75" fill="#fff"/><circle cx="17.30" cy="0.00" r="1.75" fill="#fff"/><circle cx="9.86" cy="15.00" r="1.75" fill="#fff"/><circle cx="-9.86" cy="15.00" r="1.75" fill="#fff"/><polygon points="-12.50,0.00 -6.50,-11.90 6.50,-11.90 12.50,0.00 6.50,11.90 -6.50,11.90" fill="#2c8c3c"/><circle cx="0" cy="0" r="3.05" fill="#fff"/><path d="M-12.50,0 H-8.00 M12.50,0 H8.00" stroke="#fff" stroke-width="1.30"/><path d="M-9.40,-2.70 L-5.40,0 L-9.40,2.70Z M9.40,-2.70 L5.40,0 L9.40,2.70Z" fill="#fff"/></svg>
<svg style="left:1406.6px;top:363.55px" width="9.6" height="13.5" viewBox="0 0 9.6 13.5" ><path d="M0,0 H4.8 Q7.4,0.8 9.3,6.75 Q7.4,12.7 4.8,13.5 H0Z" fill="#b8d961"/></svg>
<svg style="left:1343px;top:438.55px" width="9.6" height="13.5" viewBox="0 0 9.6 13.5" ><path d="M0,0 H9.4 V13.5 H0 L2.9,6.75Z" fill="#b8d961"/><path d="M1.2,5.2 L3.5,7 L1.2,8.8" fill="#76864c" opacity="0.85"/></svg>
<svg style="left:1353.8px;top:420.2px" width="50" height="50" viewBox="-25 -25 50 50" ><path d="M0,-24.20Q2.42,-19.36 9.68,-18.15L17.30,-17.23L18.15,-9.68Q19.36,-2.42 24.20,0.00Q19.36,2.42 18.15,9.68L17.23,17.30L9.68,18.15Q2.42,19.36 0.00,24.20Q-2.42,19.36 -9.68,18.15L-17.30,17.23L-18.15,9.68Q-19.36,2.42 -24.20,0.00Q-19.36,-2.42 -18.15,-9.68L-17.23,-17.30L-9.68,-18.15Q-2.42,-19.36 -0.00,-24.20Z" fill="#2c8c3c"/><polygon points="-17.30,0.00 -9.86,-15.00 9.86,-15.00 17.30,0.00 9.86,15.00 -9.86,15.00" fill="#fff"/><circle cx="-17.30" cy="0.00" r="1.75" fill="#fff"/><circle cx="-9.86" cy="-15.00" r="1.75" fill="#fff"/><circle cx="9.86" cy="-15.00" r="1.75" fill="#fff"/><circle cx="17.30" cy="0.00" r="1.75" fill="#fff"/><circle cx="9.86" cy="15.00" r="1.75" fill="#fff"/><circle cx="-9.86" cy="15.00" r="1.75" fill="#fff"/><polygon points="-12.50,0.00 -6.50,-11.90 6.50,-11.90 12.50,0.00 6.50,11.90 -6.50,11.90" fill="#2c8c3c"/><circle cx="0" cy="0" r="3.05" fill="#fff"/><path d="M-12.50,0 H-8.00 M12.50,0 H8.00" stroke="#fff" stroke-width="1.30"/><path d="M-9.40,-2.70 L-5.40,0 L-9.40,2.70Z M9.40,-2.70 L5.40,0 L9.40,2.70Z" fill="#fff"/></svg>
<svg style="left:1406.6px;top:438.55px" width="9.6" height="13.5" viewBox="0 0 9.6 13.5" ><path d="M0,0 H4.8 Q7.4,0.8 9.3,6.75 Q7.4,12.7 4.8,13.5 H0Z" fill="#b8d961"/></svg>
<svg style="left:1462.4px;top:288.65px" width="9.6" height="13.5" viewBox="0 0 9.6 13.5" ><path d="M0,0 H9.4 V13.5 H0 L2.9,6.75Z" fill="#b8d961"/><path d="M1.2,5.2 L3.5,7 L1.2,8.8" fill="#76864c" opacity="0.85"/></svg>
<svg style="left:1477px;top:273px" width="45" height="45.5" viewBox="0 0 45 45.5" ><path d="M3.6,0 H15.4 Q16.8,0 17.6,1.2 L18.8,3 H41 Q44.8,3 44.8,6.8 V41.4 Q44.8,45.2 41,45.2 H3.8 Q0,45.2 0,41.4 V3.6 Q0,0 3.6,0Z" fill="#07a08c"/><path d="M13.9,9.5 H19.5 V13.2 H13.9Z M25.4,9.5 H31 V13.2 H25.4Z" fill="#fff"/><path d="M11.4,15 H20 V27.5 H18.3 V35.3 H7.4 Q8.4,24 11.4,15Z" fill="#fff"/><path d="M33.5,15 H24.9 V27.5 H26.6 V35.3 H37.5 Q36.5,24 33.5,15Z" fill="#fff"/><path d="M21.2,16 H23.7 V26.2 H21.2Z" fill="#fff" opacity="0.88"/><path d="M7.4,36.9 H18.3 V39.4 H7.4Z M26.6,36.9 H37.5 V39.4 H26.6Z" fill="#fff"/></svg>
<svg style="left:1462.4px;top:438.65px" width="9.6" height="13.5" viewBox="0 0 9.6 13.5" ><path d="M0,0 H9.4 V13.5 H0 L2.9,6.75Z" fill="#b8d961"/><path d="M1.2,5.2 L3.5,7 L1.2,8.8" fill="#76864c" opacity="0.85"/></svg>
<svg style="left:1477px;top:422.8px" width="45" height="45.5" viewBox="0 0 45 45.5" ><path d="M3.6,0 H15.4 Q16.8,0 17.6,1.2 L18.8,3 H41 Q44.8,3 44.8,6.8 V41.4 Q44.8,45.2 41,45.2 H3.8 Q0,45.2 0,41.4 V3.6 Q0,0 3.6,0Z" fill="#07a08c"/><path d="M13.9,9.5 H19.5 V13.2 H13.9Z M25.4,9.5 H31 V13.2 H25.4Z" fill="#fff"/><path d="M11.4,15 H20 V27.5 H18.3 V35.3 H7.4 Q8.4,24 11.4,15Z" fill="#fff"/><path d="M33.5,15 H24.9 V27.5 H26.6 V35.3 H37.5 Q36.5,24 33.5,15Z" fill="#fff"/><path d="M21.2,16 H23.7 V26.2 H21.2Z" fill="#fff" opacity="0.88"/><path d="M7.4,36.9 H18.3 V39.4 H7.4Z M26.6,36.9 H37.5 V39.4 H26.6Z" fill="#fff"/></svg>
<svg style="left:1477px;top:333px" width="77" height="76" viewBox="0 0 77 76" ><path d="M34.8,74.7 H0.8 V0.9 H74.9 V60.6" fill="none" stroke="#2a84e4" stroke-width="1.35" stroke-dasharray="3 1.5"/></svg>
<svg style="left:1478.2px;top:363.45px" width="9.6" height="13.5" viewBox="0 0 9.6 13.5" ><path d="M0,0 H9.4 V13.5 H0 L2.9,6.75Z" fill="#b8d961"/><path d="M1.2,5.2 L3.5,7 L1.2,8.8" fill="#76864c" opacity="0.85"/></svg>
<svg style="left:1491.9px;top:347.4px" width="45" height="45.5" viewBox="0 0 45 45.5" ><path d="M3.6,0 H15.4 Q16.8,0 17.6,1.2 L18.8,3 H41 Q44.8,3 44.8,6.8 V41.4 Q44.8,45.2 41,45.2 H3.8 Q0,45.2 0,41.4 V3.6 Q0,0 3.6,0Z" fill="#07a08c"/><path d="M13.9,9.5 H19.5 V13.2 H13.9Z M25.4,9.5 H31 V13.2 H25.4Z" fill="#fff"/><path d="M11.4,15 H20 V27.5 H18.3 V35.3 H7.4 Q8.4,24 11.4,15Z" fill="#fff"/><path d="M33.5,15 H24.9 V27.5 H26.6 V35.3 H37.5 Q36.5,24 33.5,15Z" fill="#fff"/><path d="M21.2,16 H23.7 V26.2 H21.2Z" fill="#fff" opacity="0.88"/><path d="M7.4,36.9 H18.3 V39.4 H7.4Z M26.6,36.9 H37.5 V39.4 H26.6Z" fill="#fff"/></svg>
<svg style="left:1511.7px;top:379.3px" width="13" height="20" viewBox="0 0 13 20" ><path d="M0.7,0.8 V15.6 L4.2,12.4 L6.8,18.6 L9.2,17.6 L6.6,11.6 H11.4Z" fill="#fff" stroke="#111" stroke-width="1" stroke-linejoin="round"/></svg>
<!--RESULTS-->
<svg style="left:1846.9px;top:678.5px" width="3" height="13" viewBox="0 0 3 13" ><circle cx="1.5" cy="1.6" r="1.15" fill="#4d5878"/><circle cx="1.5" cy="6.5" r="1.15" fill="#4d5878"/><circle cx="1.5" cy="11.4" r="1.15" fill="#4d5878"/></svg>
<svg style="left:1873.4px;top:678.8px" width="12" height="16" viewBox="0 0 12 16" ><path d="M3,1 H9 M4,1 V7.2 M8,1 V7.2 M1.2,8 H10.8 M6,8 V15" fill="none" stroke="#4d5878" stroke-width="1.5" stroke-linecap="round"/><path d="M4,1.5 H8 V7.5 H4Z" fill="none"/></svg>
<svg style="left:652.4px;top:719px" width="14" height="12" viewBox="0 0 14 12" ><path d="M4,1.5 H13.6 M4,6 H13.6 M4,10.5 H13.6" stroke="#5e6a8c" stroke-width="1.4"/><path d="M0.3,1.5 H1.8 M0.3,6 H1.8 M0.3,10.5 H1.8" stroke="#5e6a8c" stroke-width="1.2"/></svg>
<div class="abs" style="left:649px;top:741px;width:22px;height:21.5px;background:#dbe8f7;border-radius:3px;"></div>
<svg style="left:652px;top:746px" width="16" height="11" viewBox="0 0 16 11" ><circle cx="4" cy="6.8" r="3" fill="none" stroke="#1769d3" stroke-width="1.7"/><circle cx="12" cy="6.8" r="3" fill="none" stroke="#1769d3" stroke-width="1.7"/><path d="M2.6,3.8 L4.4,0.8 H6.6 V5 M13.4,3.8 L11.6,0.8 H9.4 V5 M6.6,4.2 H9.4" fill="none" stroke="#1769d3" stroke-width="1.6"/></svg>
<svg style="left:652px;top:772px" width="16" height="16" viewBox="0 0 16 16" ><circle cx="7.6" cy="7.7" r="6.6" fill="none" stroke="#5e6a8c" stroke-width="1.1"/><text x="7.6" y="11.2" text-anchor="middle" font-family="Liberation Sans, sans-serif" font-size="9.5" font-weight="700" fill="#5e6a8c">?</text></svg>
<svg style="left:782.2px;top:733px" width="7" height="5" viewBox="0 0 7 5" ><path d="M0,0.3 H7 L3.5,4.2Z" fill="#15151f"/></svg>
<svg style="left:938.4px;top:733px" width="7" height="5" viewBox="0 0 7 5" ><path d="M0,0.3 H7 L3.5,4.2Z" fill="#15151f"/></svg>
<svg style="left:1828.5px;top:733px" width="7" height="5" viewBox="0 0 7 5" ><path d="M0,0.3 H7 L3.5,4.2Z" fill="#15151f"/></svg>
<svg style="left:802px;top:726px" width="21" height="18" viewBox="0 0 21 18" ><path d="M1.7,10 L8.1,15.2 L18.4,3.9" fill="none" stroke="#a9a9a9" stroke-width="4.2"/></svg>
<div class="abs" style="left:837.0px;top:722px;width:1.8px;height:25px;background:#c6c6c9;"></div>
<div class="abs" style="left:1162.0px;top:722px;width:1.8px;height:25px;background:#c6c6c9;"></div>
<div class="abs" style="left:1245.8px;top:722px;width:1.2px;height:25px;background:#c8c8cc;"></div>
<div class="abs" style="left:1755px;top:722.5px;width:1px;height:24px;background:#d3d6de;"></div>
<svg style="left:1176px;top:725px" width="20" height="20" viewBox="0 0 20 20" ><path d="M10,1 V19 M1.4,10.6 L10,1.2 L18.6,10.6" fill="none" stroke="#ababab" stroke-width="2.2"/></svg>
<svg style="left:1211px;top:725px" width="20" height="20" viewBox="0 0 20 20" ><path d="M10,0.3 V18.4 M1.4,9.2 L10,18.6 L18.6,9.2" fill="none" stroke="#ababab" stroke-width="2.2"/></svg>
<svg style="left:1332.5px;top:727.5px" width="14" height="14" viewBox="0 0 14 14" ><circle cx="6" cy="6" r="4.9" fill="none" stroke="#8491b0" stroke-width="1.3"/><path d="M9.6,9.8 L12.6,12.8" stroke="#8491b0" stroke-width="1.4"/></svg>
<div class="abs" style="left:1666px;top:716px;width:74px;height:32px;border-top:1px solid #d3dbea;border-right:1px solid #d3dbea;border-radius:0 3px 0 0"></div>
<div class="abs" style="left:1621.4px;top:716px;width:44.8px;height:32.6px;background:#0b6fd2;border-radius:4px 0 0 4px;"></div>
<div class="abs" style="left:763px;top:764px;width:1px;height:43px;background:#d3dcea;"></div>
<div class="abs" style="left:764.5px;top:781px;width:279.5px;height:2.6px;background:#8fe36b;"></div>
<div class="abs" style="left:677px;top:783.6px;width:367px;height:2.4px;background:#d9e3f0;"></div>
<div class="abs" style="left:677px;top:806px;width:367px;height:1px;background:#cfdaea;"></div>
<div class="abs" style="left:1043.5px;top:763px;width:1px;height:2px;background:#c9d2e0;"></div>
<!--TEXT-->
<span class="t" style="left:10.0px;top:-7.70px;font-size:15px;line-height:15px;font-weight:400;color:#2a2f45;letter-spacing:-0.724px;"><u style="text-underline-offset:2.4px;text-decoration-thickness:1.1px">F</u>ile</span><span class="t" style="left:71.0px;top:-7.70px;font-size:15px;line-height:15px;font-weight:400;color:#2a2f45;letter-spacing:-0.286px;"><u style="text-underline-offset:2.4px;text-decoration-thickness:1.1px">E</u>dit</span><span class="t" style="left:135.0px;top:-7.70px;font-size:15px;line-height:15px;font-weight:400;color:#2a2f45;letter-spacing:-0.417px;"><u style="text-underline-offset:2.4px;text-decoration-thickness:1.1px">V</u>iew</span><span class="t" style="left:205.0px;top:-7.70px;font-size:15px;line-height:15px;font-weight:400;color:#2a2f45;letter-spacing:0.049px;"><u style="text-underline-offset:2.4px;text-decoration-thickness:1.1px">O</u>ptions</span><span class="t" style="left:296.0px;top:-7.70px;font-size:15px;line-height:15px;font-weight:400;color:#2a2f45;letter-spacing:0.047px;"><u style="text-underline-offset:2.4px;text-decoration-thickness:1.1px">H</u>elp</span><span class="t" style="left:1422.0px;top:-8.40px;font-size:15px;line-height:15px;font-weight:400;color:#6f7b9b;letter-spacing:-0.174px;">general</span><span class="t" style="left:16.0px;top:29.50px;font-size:13px;line-height:13px;font-weight:400;color:#2f3550;letter-spacing:0.441px;-webkit-text-stroke:0.3px #2f3550;">Favorites</span><span class="t" style="left:116.0px;top:29.50px;font-size:13px;line-height:13px;font-weight:400;color:#2f3550;letter-spacing:0.684px;-webkit-text-stroke:0.3px #2f3550;">Recommended</span><span class="t" style="left:309.0px;top:29.50px;font-size:13px;line-height:13px;font-weight:400;color:#2f3550;letter-spacing:1.316px;-webkit-text-stroke:0.3px #2f3550;">In/Out</span><span class="t" style="left:394.0px;top:29.50px;font-size:13px;line-height:13px;font-weight:400;color:#2f3550;letter-spacing:0.678px;-webkit-text-stroke:0.3px #2f3550;">Preparation</span><span class="t" style="left:511.0px;top:29.50px;font-size:13px;line-height:13px;font-weight:400;color:#2f3550;letter-spacing:0.714px;-webkit-text-stroke:0.3px #2f3550;">Join</span><span class="t" style="left:580.0px;top:29.50px;font-size:13px;line-height:13px;font-weight:400;color:#2f3550;letter-spacing:-0.242px;-webkit-text-stroke:0.3px #2f3550;">Parse</span><span class="t" style="left:656.0px;top:29.50px;font-size:13px;line-height:13px;font-weight:400;color:#2f3550;letter-spacing:0.656px;-webkit-text-stroke:0.3px #2f3550;">Transform</span><span class="t" style="left:762.0px;top:29.50px;font-size:13px;line-height:13px;font-weight:400;color:#2f3550;letter-spacing:0.717px;-webkit-text-stroke:0.3px #2f3550;">In-Database</span><span class="t" style="left:883.0px;top:29.50px;font-size:13px;line-height:13px;font-weight:400;color:#2f3550;letter-spacing:0.953px;-webkit-text-stroke:0.3px #2f3550;">Reporting</span><span class="t" style="left:990.0px;top:29.50px;font-size:13px;line-height:13px;font-weight:400;color:#2f3550;letter-spacing:1.046px;-webkit-text-stroke:0.3px #2f3550;">Documentation</span><span class="t" style="left:1133.0px;top:29.50px;font-size:13px;line-height:13px;font-weight:400;color:#2f3550;letter-spacing:0.542px;-webkit-text-stroke:0.3px #2f3550;">Spatial</span><span class="t" style="left:1219.0px;top:29.50px;font-size:13px;line-height:13px;font-weight:400;color:#2f3550;letter-spacing:0.709px;-webkit-text-stroke:0.3px #2f3550;">Machine Learning</span><span class="t" style="left:1376.0px;top:29.50px;font-size:13px;line-height:13px;font-weight:400;color:#2f3550;letter-spacing:0.925px;-webkit-text-stroke:0.3px #2f3550;">Text Mining</span><span class="t" style="left:1494.0px;top:29.50px;font-size:13px;line-height:13px;font-weight:400;color:#2f3550;letter-spacing:0.795px;-webkit-text-stroke:0.3px #2f3550;">Computer Vision</span><span class="t" style="left:1644.0px;top:29.50px;font-size:13px;line-height:13px;font-weight:400;color:#2f3550;letter-spacing:0.551px;-webkit-text-stroke:0.3px #2f3550;">Interface</span><span class="t" style="left:1743.0px;top:29.50px;font-size:13px;line-height:13px;font-weight:400;color:#2f3550;letter-spacing:0.876px;-webkit-text-stroke:0.3px #2f3550;-webkit-mask-image:linear-gradient(90deg,#000 62%,rgba(0,0,0,0) 98%);mask-image:linear-gradient(90deg,#000 62%,rgba(0,0,0,0) 98%);">Data Investiga</span><span class="t" style="left:-9.0px;top:148.95px;font-size:14px;line-height:14px;font-weight:700;color:#515c7c;letter-spacing:-0.276px;">Browse (14)</span><span class="t" style="left:75.0px;top:148.95px;font-size:14px;line-height:14px;font-weight:400;color:#5d6c8c;letter-spacing:0.000px;transform:scaleX(0.997);transform-origin:0 0;">-</span><span class="t" style="left:82.8px;top:148.95px;font-size:14px;line-height:14px;font-weight:400;color:#5d6c8c;letter-spacing:0.243px;">Configuration</span><span class="t" style="left:660.2px;top:148.83px;font-size:13.2px;line-height:13.2px;font-weight:400;color:#6d7893;letter-spacing:0.842px;">Copy of New Workflow8*</span><span class="t" style="left:872.3px;top:148.83px;font-size:13.2px;line-height:13.2px;font-weight:400;color:#363c52;letter-spacing:0.969px;">New Workflow13*</span><span class="t" style="left:1845.8px;top:147.60px;font-size:15px;line-height:15px;font-weight:400;color:#ffffff;letter-spacing:-1.266px;">Run</span><span class="t" style="left:366.0px;top:259.95px;font-size:14px;line-height:14px;font-weight:400;color:#1c1c2c;letter-spacing:0.198px;">Alteryx Streets</span><span class="t" style="left:730.4px;top:318.15px;font-size:14px;line-height:14px;font-weight:700;color:#7d7d7d;letter-spacing:-0.509px;">housing.csv</span><span class="t" style="left:1045.6px;top:318.15px;font-size:14px;line-height:14px;font-weight:700;color:#7d7d7d;letter-spacing:-0.306px;">1 of every 2</span><span class="t" style="left:1522.6px;top:401.50px;font-size:13px;line-height:13px;font-weight:400;color:#45455f;letter-spacing:0.002px;">Browse (14)</span><span class="t" style="left:656.0px;top:678.55px;font-size:14px;line-height:14px;font-weight:700;color:#5a6582;letter-spacing:-0.763px;">Results</span><span class="t" style="left:707.4px;top:678.55px;font-size:14px;line-height:14px;font-weight:400;color:#6b7a9a;letter-spacing:0.000px;transform:scaleX(0.997);transform-origin:0 0;">-</span><span class="t" style="left:715.0px;top:678.55px;font-size:14px;line-height:14px;font-weight:400;color:#6b7a9a;letter-spacing:0.355px;">Workflow</span><span class="t" style="left:779.0px;top:678.55px;font-size:14px;line-height:14px;font-weight:400;color:#6b7a9a;letter-spacing:0.000px;transform:scaleX(0.997);transform-origin:0 0;">-</span><span class="t" style="left:786.4px;top:678.55px;font-size:14px;line-height:14px;font-weight:400;color:#6b7a9a;letter-spacing:-0.316px;">Messages</span><span class="t" style="left:692.7px;top:725.88px;font-size:15.5px;line-height:15.5px;font-weight:400;color:#1e1e30;letter-spacing:-0.595px;">1 of 1 Fields</span><span class="t" style="left:853.8px;top:725.88px;font-size:15.5px;line-height:15.5px;font-weight:400;color:#1e1e30;letter-spacing:-0.551px;">Cell Viewer</span><span class="t" style="left:959.0px;top:725.88px;font-size:15.5px;line-height:15.5px;font-weight:400;color:#1e1e30;letter-spacing:-0.507px;">1 record displayed, 628 bytes</span><span class="t" style="left:1353.6px;top:726.65px;font-size:14px;line-height:14px;font-weight:400;color:#5f6b88;letter-spacing:-0.452px;">Search</span><span class="t" style="left:1628.3px;top:726.65px;font-size:14px;line-height:14px;font-weight:400;color:#ffffff;letter-spacing:0.041px;-webkit-text-stroke:0.25px #fff;">Data</span><span class="t" style="left:1672.6px;top:726.65px;font-size:14px;line-height:14px;font-weight:400;color:#15151f;letter-spacing:0.461px;-webkit-text-stroke:0.4px #15151f;">Metadata</span><span class="t" style="left:1771.3px;top:725.88px;font-size:15.5px;line-height:15.5px;font-weight:400;color:#1e1e30;letter-spacing:-0.191px;">Actions</span><span class="t" style="left:1850.7px;top:729.69px;font-size:11px;line-height:11px;font-weight:700;color:#15151f;letter-spacing:-0.030px;">000</span><span class="t" style="left:681.3px;top:766.55px;font-size:14px;line-height:14px;font-weight:700;color:#2a2a3a;letter-spacing:-0.867px;">Record</span><span class="t" style="left:768.3px;top:766.55px;font-size:14px;line-height:14px;font-weight:700;color:#1a1a28;letter-spacing:-0.342px;">SpatialObj_Built</span><span class="t" style="left:751.3px;top:790.15px;font-size:14px;line-height:14px;font-weight:400;color:#3a3050;letter-spacing:0.000px;transform:scaleX(0.770);transform-origin:0 0;">1</span><span class="t" style="left:768.7px;top:790.15px;font-size:14px;line-height:14px;font-weight:400;color:#2f7d32;letter-spacing:0.119px;">Polygon - View Browse Tool Map Tab</span>
<!--FRAME-->
<div class="abs" style="left:1882px;top:0;width:1px;height:935px;background:#a6a6a6"></div>
<div class="abs" style="left:0;top:934px;width:1883px;height:1px;background:#848484"></div>
<div class="abs" style="left:1882px;top:934px;width:1px;height:1px;background:#626268"></div>
</body></html>
